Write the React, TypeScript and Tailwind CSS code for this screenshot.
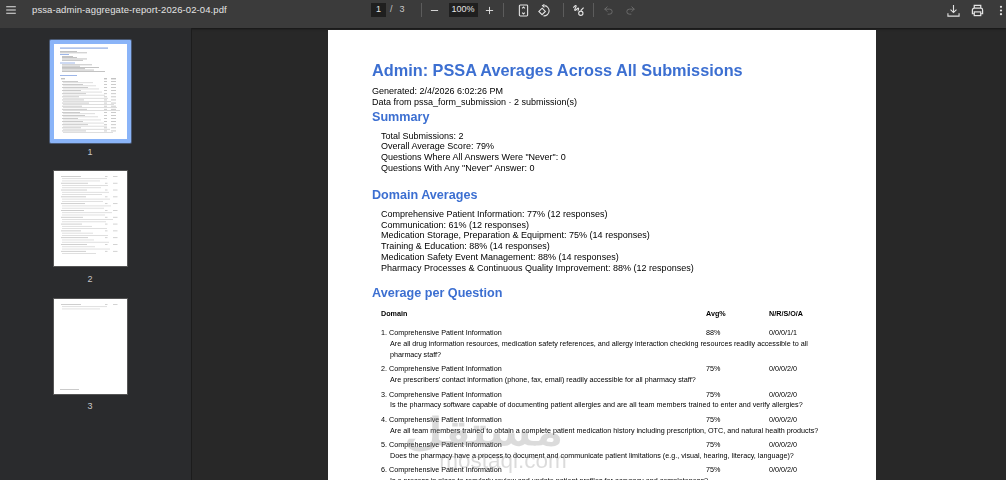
import { Minus, Plus, Redo2, Undo2 } from 'lucide-react';

const summary = [
  'Total Submissions: 2',
  'Overall Average Score: 79%',
  'Questions Where All Answers Were "Never": 0',
  'Questions With Any "Never" Answer: 0',
];

const domains = [
  'Comprehensive Patient Information: 77% (12 responses)',
  'Communication: 61% (12 responses)',
  'Medication Storage, Preparation & Equipment: 75% (14 responses)',
  'Training & Education: 88% (14 responses)',
  'Medication Safety Event Management: 88% (14 responses)',
  'Pharmacy Processes & Continuous Quality Improvement: 88% (12 responses)',
];

const questions = [
  { avg: '88%', counts: '0/0/0/1/1', text: 'Are all drug information resources, medication safety references, and allergy interaction checking resources readily accessible to all pharmacy staff?' },
  { avg: '75%', counts: '0/0/0/2/0', text: "Are prescribers' contact information (phone, fax, email) readily accessible for all pharmacy staff?" },
  { avg: '75%', counts: '0/0/0/2/0', text: 'Is the pharmacy software capable of documenting patient allergies and are all team members trained to enter and verify allergies?' },
  { avg: '75%', counts: '0/0/0/2/0', text: 'Are all team members trained to obtain a complete patient medication history including prescription, OTC, and natural health products?' },
  { avg: '75%', counts: '0/0/0/2/0', text: 'Does the pharmacy have a process to document and communicate patient limitations (e.g., visual, hearing, literacy, language)?' },
  { avg: '75%', counts: '0/0/0/2/0', text: 'Is a process in place to regularly review and update patient profiles for accuracy and completeness?' },
];

function ThumbLines({ rows, footer }: { rows: number; footer?: boolean }) {
  const items = Array.from({ length: rows }, (_, i) => i);
  return (
    <svg viewBox="0 0 73 95" className="h-full w-full blur-[0.4px]">
      {items.map((i) => {
        const y = 5 + i * 2.27;
        const long = i % 3 !== 0;
        const w = long ? 30 + ((i * 37) % 22) : 20 + ((i * 13) % 8);
        return (
          <g key={i}>
            <rect x={long ? 8 : 7} y={y} width={w} height="0.8" fill={long ? '#d8d8d8' : '#c4c4c4'} />
            {!long && <rect x="51" y={y} width="2.5" height="0.8" fill="#c8c8c8" />}
            {!long && <rect x="59" y={y} width="4.5" height="0.8" fill="#c8c8c8" />}
          </g>
        );
      })}
      {footer && <rect x="6" y="90" width="19" height="0.8" fill="#bdbdbd" />}
    </svg>
  );
}

function FirstThumb() {
  return (
    <svg viewBox="0 0 73 95" className="h-full w-full blur-[0.4px]">
      <rect x="6" y="3.500" width="48" height="1.2" fill="#8fabe3" />
      <rect x="6" y="7" width="17" height="0.7" fill="#aaa" />
      <rect x="6" y="8.500" width="27" height="0.7" fill="#aaa" />
      <rect x="6" y="10" width="9" height="1" fill="#9db6e8" />
      {[12, 13.3, 14.6, 15.9].map((y, i) => (
        <rect key={y} x="8" y={y} width={[11, 15, 25, 21][i]} height="0.7" fill="#aaa" />
      ))}
      <rect x="6" y="18.500" width="15" height="1" fill="#9db6e8" />
      {[20.5, 21.8, 23.1, 24.4, 25.7, 27].map((y, i) => (
        <rect key={y} x="8" y={y} width={[30, 18, 37, 23, 32, 43][i]} height="0.7" fill="#aaa" />
      ))}
      <rect x="6" y="31" width="17" height="1" fill="#9db6e8" />
      <rect x="7" y="34.500" width="4" height="0.7" fill="#888" />
      <rect x="50" y="34.500" width="3" height="0.7" fill="#888" />
      <rect x="57" y="34.500" width="5" height="0.7" fill="#888" />
      {Array.from({ length: 17 }, (_, i) => i).map((i) => (
        <g key={i}>
          <rect x="8" y={37 + i * 3.1} width={16 + ((i * 29) % 12)} height="0.7" fill="#b5b5b5" />
          <rect x="9" y={38.4 + i * 3.1} width={30 + ((i * 31) % 28)} height="0.7" fill="#d0d0d0" />
          <rect x="50" y={37 + i * 3.1} width="3" height="0.7" fill="#b5b5b5" />
          <rect x="57" y={37 + i * 3.1} width="5" height="0.7" fill="#b5b5b5" />
        </g>
      ))}
    </svg>
  );
}

function Divider({ className }: { className: string }) {
  return <div className={`h-[14px] w-px bg-[#5c5c5c] ${className}`} />;
}

function Toolbar() {
  return (
    <header className="flex h-[28px] shrink-0 items-start bg-[#3b3b3b] pt-[3px] text-[#e3e3e3] shadow-[0_1px_2px_rgba(0,0,0,0.5)]">
      <div className="flex h-[14px] w-[371px] items-center">
        <svg viewBox="0 0 12 10" className="ml-[6px] h-[8px] w-[10px]" fill="none" stroke="currentColor" strokeWidth="1.300">
          <path d="M0 1h12M0 5h12M0 9h12" />
        </svg>
        <span className="ml-[16px] text-[9.5px] font-medium tracking-[0.1px]">pssa-admin-aggregate-report-2026-02-04.pdf</span>
      </div>
      <div className="flex h-[14px] flex-1 items-center">
        <span className="flex h-[14px] w-[15px] items-center justify-center bg-[#1f1f1f] text-[9px]">1</span>
        <span className="ml-[4px] text-[9px] text-[#c7c7c7]">/</span>
        <span className="ml-[7px] text-[9px] text-[#c7c7c7]">3</span>
        <Divider className="ml-[16px]" />
        <Minus className="ml-[7px] h-[11px] w-[11px]" />
        <span className="ml-[9px] flex h-[14px] w-[29px] items-center justify-center bg-[#1f1f1f] text-[9px]">100%</span>
        <Plus className="ml-[6px] h-[11px] w-[11px]" />
        <Divider className="ml-[8px]" />
        <svg viewBox="0 0 12 14" className="ml-[14px] h-[13px] w-[11px]" fill="none" stroke="currentColor" strokeWidth="1.200">
          <rect x="1.500" y="1" width="9" height="12" rx="1" />
          <path d="M4.500 4.800 6 3.300l1.500 1.500M4.500 9.200 6 10.700l1.500-1.500" />
        </svg>
        <svg viewBox="0 0 14 14" className="ml-[8px] h-[13px] w-[13px]" fill="none" stroke="currentColor" strokeWidth="1.200">
          <path d="M8 1.800a5.300 5.300 0 1 1-1 11M8 .5 6 1.800l2 1.800" />
          <path d="M5.500 4.500 9 8l-3.500 3.500L2 8z" />
        </svg>
        <Divider className="ml-[13px]" />
        <svg viewBox="0 0 14 14" className="ml-[8px] h-[13px] w-[13px]" fill="none" stroke="currentColor" strokeWidth="1.200">
          <path d="M1.500 4c1-1.500 2.500-3 3-2.200C5 3 2 6 3 6.800c1 .7 3-2.800 4-2.300.8.500-1 2.500-.3 3" />
          <circle cx="9.500" cy="10" r="2.300" />
          <path d="m12.500 4-3 3" />
        </svg>
        <Divider className="ml-[8px]" />
        <Undo2 className="ml-[9px] h-[11px] w-[11px] text-[#6f6f6f]" />
        <Redo2 className="ml-[11px] h-[11px] w-[11px] text-[#6f6f6f]" />
      </div>
      <div className="flex h-[14px] items-center">
        <svg viewBox="0 0 14 14" className="h-[13px] w-[13px]" fill="none" stroke="currentColor" strokeWidth="1.200">
          <path d="M7 1v8M3.800 6 7 9.200 10.200 6M1 10v3h12v-3" />
        </svg>
        <svg viewBox="0 0 14 14" className="ml-[11px] h-[13px] w-[13px]" fill="none" stroke="currentColor" strokeWidth="1.300">
          <path d="M3.500 4.500V1.500h7v3M3.500 10.500H1.500v-4a2 2 0 0 1 2-2h7a2 2 0 0 1 2 2v4h-2" />
          <rect x="3.500" y="8.500" width="7" height="4" />
        </svg>
        <svg viewBox="0 0 4 14" className="ml-[15px] mr-[3px] h-[13px] w-[4px]" fill="currentColor">
          <circle cx="2" cy="3" r="1.200" />
          <circle cx="2" cy="7" r="1.200" />
          <circle cx="2" cy="11" r="1.200" />
        </svg>
      </div>
    </header>
  );
}

function Sidebar() {
  return (
    <aside className="flex w-[191px] shrink-0 flex-col items-center bg-[#2a2b2d] pr-[11px] text-[9px] leading-[11px] text-[#c7c7c7]">
      <div className="mt-[12px] h-[103px] w-[81px] rounded-[1px] bg-[#8ab4f8] p-[4px] shadow-[0_0_0_1px_#4a5a75]">
        <div className="h-full w-full bg-white">
          <FirstThumb />
        </div>
      </div>
      <span className="mt-[4px]">1</span>
      <div className="mt-[13px] h-[95px] w-[73px] bg-white shadow-[0_0_0_1px_#555]">
        <ThumbLines rows={35} />
      </div>
      <span className="mt-[8px]">2</span>
      <div className="mt-[14px] h-[95px] w-[73px] bg-white shadow-[0_0_0_1px_#555]">
        <ThumbLines rows={3} footer />
      </div>
      <span className="mt-[7px]">3</span>
    </aside>
  );
}

function SectionTitle({ children, className }: { children: string; className: string }) {
  return <h2 className={`text-[12.6px] font-bold leading-[15px] text-[#3c6fd1] ${className}`}>{children}</h2>;
}

function Page() {
  return (
    <article className="ml-[136px] mt-[2px] w-[548px] bg-white px-[44px] pt-[29px] text-[9px] leading-[10.8px] text-black blur-[0.25px]">
      <h1 className="whitespace-nowrap text-[16.3px] font-bold leading-[22px] text-[#3c6fd1]">Admin: PSSA Averages Across All Submissions</h1>
      <p className="mt-[5px]">Generated: 2/4/2026 6:02:26 PM</p>
      <p>Data from pssa_form_submission · 2 submission(s)</p>
      <SectionTitle className="mt-[2px]">Summary</SectionTitle>
      <ul className="mt-[6px] pl-[9px]">
        {summary.map((line) => (
          <li key={line}>{line}</li>
        ))}
      </ul>
      <SectionTitle className="mt-[14px]">Domain Averages</SectionTitle>
      <ul className="mt-[6px] pl-[9px]">
        {domains.map((line) => (
          <li key={line}>{line}</li>
        ))}
      </ul>
      <SectionTitle className="mt-[12px]">Average per Question</SectionTitle>
      <div className="mt-[8px] text-[7.2px] leading-[10.8px]">
        <div className="grid grid-cols-[325px_63px_1fr] pl-[9px] font-bold">
          <span>Domain</span>
          <span>Avg%</span>
          <span>N/R/S/O/A</span>
        </div>
        <div className="mt-[9px] flex flex-col gap-[3.6px]">
          {questions.map((q, i) => (
            <div key={i} className="pl-[9px]">
              <div className="grid grid-cols-[325px_63px_1fr]">
                <span>{i + 1}. Comprehensive Patient Information</span>
                <span>{q.avg}</span>
                <span>{q.counts}</span>
              </div>
              <p className="pl-[9px] pr-[8px]">{q.text}</p>
            </div>
          ))}
        </div>
      </div>
    </article>
  );
}

export default function App() {
  return (
    <div className="relative flex h-[480px] w-[1006px] flex-col overflow-hidden bg-[#282828] font-['Liberation_Sans',Arial,sans-serif]">
      <Toolbar />
      <div className="flex min-h-0 flex-1">
        <Sidebar />
        <main className="min-w-0 flex-1 overflow-hidden border-l border-[#1c1c1c]">
          <Page />
        </main>
      </div>
      <div className="pointer-events-none absolute left-[442px] top-[408px] flex w-[122px] flex-col items-center text-[#8c8c8c] opacity-30 blur-[0.5px]">
        <span dir="rtl" className="-translate-x-[20px] scale-x-[1.4] font-['Noto_Sans',sans-serif] text-[38px] font-bold leading-[44px]">مستقل</span>
        <span className="whitespace-nowrap text-[22.5px] leading-[18px]">mostaql.com</span>
      </div>
    </div>
  );
}
